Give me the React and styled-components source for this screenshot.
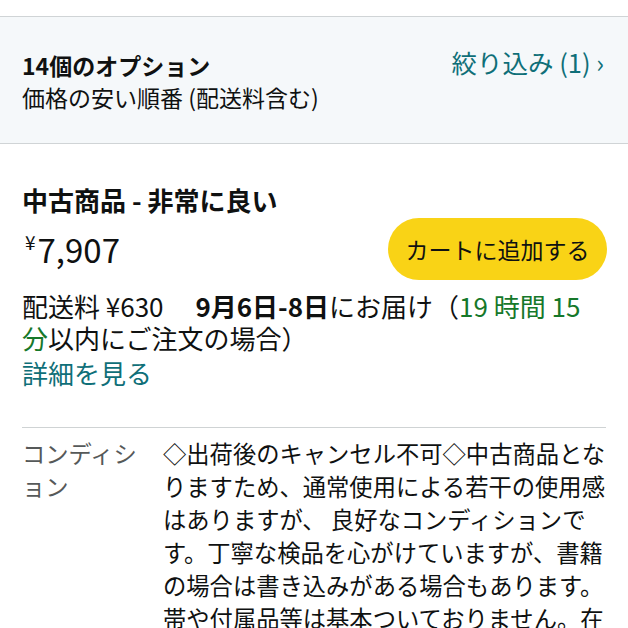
import React from "react";
import styled, { createGlobalStyle } from "styled-components";

const Global = createGlobalStyle`
  html, body { margin: 0; padding: 0; background: #ffffff; }
  body {
    font-family: "Noto Sans CJK JP", "Noto Sans", sans-serif;
    color: #0f1111;
    -webkit-font-smoothing: antialiased;
  }
`;

const Page = styled.div`
  width: 628px;
  height: 628px;
  overflow: hidden;
  padding-top: 16px;
  box-sizing: border-box;
`;

const Header = styled.header`
  height: 128px;
  box-sizing: border-box;
  background: #f5f8fa;
  border-top: 1px solid #d0d4d6;
  border-bottom: 1px solid #d0d4d6;
  padding: 33px 22px 0 22px;
  display: flex;
  justify-content: space-between;
  align-items: flex-start;
`;

const HeaderText = styled.div`
  display: flex;
  flex-direction: column;
`;

const Count = styled.div`
  font-size: 23px;
  font-weight: 700;
  line-height: 30px;
`;

const Sort = styled.div`
  font-size: 23px;
  line-height: 30px;
  margin-top: 2px;
`;

const FilterLink = styled.a`
  font-size: 25.5px;
  line-height: 28px;
  color: #0f6f78;
  text-decoration: none;
  margin-top: -2px;
  margin-right: 2px;
`;

const Offer = styled.section`
  padding: 39px 22px 0 22px;
`;

const Condition = styled.h2`
  margin: 0;
  font-size: 26px;
  font-weight: 700;
  line-height: 34px;
`;

const PriceRow = styled.div`
  display: flex;
  justify-content: space-between;
  align-items: center;
  margin-top: 1px;
`;

const Price = styled.div`
  display: flex;
  align-items: flex-start;
  padding-left: 3px;
  color: #0f1111;
`;

const Yen = styled.span`
  font-size: 19px;
  line-height: 20px;
  margin-top: 2px;
  margin-right: 2px;
`;

const Amount = styled.span`
  font-size: 33px;
  line-height: 38px;
  font-weight: 400;
`;

const CartButton = styled.button`
  width: 219px;
  height: 62px;
  border: none;
  border-radius: 31px;
  background: #f9d316;
  color: #0f1111;
  font-family: inherit;
  font-size: 23px;
  padding: 0;
  margin-right: -1px;
  cursor: pointer;
`;

const Delivery = styled.div`
  margin-top: 10px;
  font-size: 26px;
  line-height: 32px;
  max-width: 572px;
`;

const Strong = styled.span`
  font-weight: 700;
`;

const Countdown = styled.span`
  color: #16782a;
`;

const DetailLink = styled.a`
  display: block;
  margin-top: 3px;
  font-size: 26px;
  line-height: 32px;
  color: #0f6f78;
  text-decoration: none;
`;

const Divider = styled.hr`
  margin: 38px 0 0 0;
  border: none;
  border-top: 1px solid #cfd3d4;
`;

const DetailGrid = styled.div`
  display: grid;
  grid-template-columns: 128px 443px;
  column-gap: 13px;
  padding-top: 9px;
  font-size: 23.3px;
  line-height: 33px;
`;

const Label = styled.div`
  color: #565959;
`;

const Body = styled.div`
  color: #0f1111;
  line-break: strict;
`;

export default function App() {
  return (
    <Page>
      <Global />
      <Header>
        <HeaderText>
          <Count>14個のオプション</Count>
          <Sort>価格の安い順番 (配送料含む)</Sort>
        </HeaderText>
        <FilterLink href="#">絞り込み (1) ›</FilterLink>
      </Header>
      <Offer>
        <Condition>中古商品 - 非常に良い</Condition>
        <PriceRow>
          <Price>
            <Yen>¥</Yen>
            <Amount>7,907</Amount>
          </Price>
          <CartButton>カートに追加する</CartButton>
        </PriceRow>
        <Delivery>
          配送料 ¥630{"\u3000 "}
          <Strong>9月6日-8日</Strong>にお届け（
          <Countdown>19 時間 15 分</Countdown>以内にご注文の場合）
        </Delivery>
        <DetailLink href="#">詳細を見る</DetailLink>
        <Divider />
        <DetailGrid>
          <Label>コンディション</Label>
          <Body>
            ◇出荷後のキャンセル不可◇中古商品となりますため、通常使用による若干の使用感はありますが、
            良好なコンディションです。丁寧な検品を心がけていますが、書籍の場合は書き込みがある場合もあります。帯や付属品等は基本ついておりません。在庫状況により、ご注文後にキャンセルさせていただく場合がございます。
          </Body>
        </DetailGrid>
      </Offer>
    </Page>
  );
}
